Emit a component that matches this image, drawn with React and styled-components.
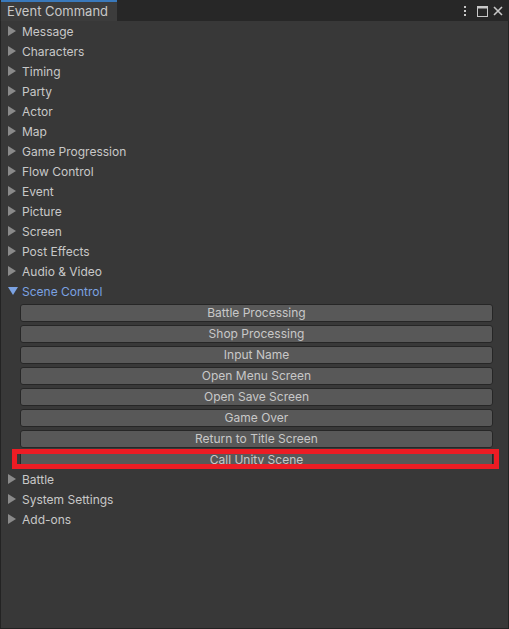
import React from "react";
import styled, { createGlobalStyle } from "styled-components";

const colors = {
  panel: "#383838",
  strip: "#272727",
  tab: "#3c3c3c",
  tabLine: "#3a79bb",
  text: "#c8c8c8",
  arrow: "#8a8a8a",
  open: "#7ba2e2",
  button: "#585858",
  buttonBorder: "#262626",
  edge: "#232323",
  mark: "#ed1c24",
};

const categories = [
  "Message",
  "Characters",
  "Timing",
  "Party",
  "Actor",
  "Map",
  "Game Progression",
  "Flow Control",
  "Event",
  "Picture",
  "Screen",
  "Post Effects",
  "Audio & Video",
];

const sceneCommands = [
  "Battle Processing",
  "Shop Processing",
  "Input Name",
  "Open Menu Screen",
  "Open Save Screen",
  "Game Over",
  "Return to Title Screen",
  "Call Unity Scene",
];

const afterCategories = ["Battle", "System Settings", "Add-ons"];

const GlobalStyle = createGlobalStyle`
  html, body {
    margin: 0;
    padding: 0;
    background: ${colors.panel};
  }
  body {
    font-family: Inter, "Noto Sans", "Liberation Sans", sans-serif;
  }
`;

const Window = styled.div`
  width: 509px;
  height: 629px;
  box-sizing: border-box;
  display: flex;
  flex-direction: column;
  background: ${colors.panel};
  border: 1px solid ${colors.edge};
  border-top: none;
`;

const TabStrip = styled.div`
  height: 21px;
  display: flex;
  align-items: stretch;
  background: ${colors.strip};
  margin: 0 -1px;
  padding-left: 1px;
`;

const Tab = styled.div`
  width: 116px;
  box-sizing: border-box;
  border-top: 2px solid ${colors.tabLine};
  background: ${colors.tab};
  color: ${colors.text};
  font-size: 13px;
  line-height: 19px;
  padding-left: 6px;
`;

const Spacer = styled.div`
  flex: 1;
`;

const Tools = styled.div`
  display: flex;
  align-items: center;
  padding: 1px 6px 0 0;
  color: ${colors.text};
`;

const ToolSlot = styled.span`
  display: flex;
  margin-left: ${(p) => p.$gap}px;
`;

const List = styled.div`
  display: flex;
  flex-direction: column;
`;

const Row = styled.div`
  height: 20px;
  display: flex;
  align-items: center;
  gap: 6px;
  padding-left: 7px;
  font-size: 12px;
  color: ${(p) => (p.$open ? colors.open : colors.text)};
`;

const Arrow = styled.span`
  width: 0;
  height: 0;
  ${(p) =>
    p.$open
      ? `
    border-left: 5px solid transparent;
    border-right: 5px solid transparent;
    border-top: 8px solid ${colors.open};
    margin-right: -2px;
  `
      : `
    border-top: 5px solid transparent;
    border-bottom: 5px solid transparent;
    border-left: 8px solid ${colors.arrow};
  `}
`;

const Commands = styled.div`
  display: flex;
  flex-direction: column;
  gap: 3px;
  padding: 3px 15px 0 19px;
`;

const CommandButton = styled.div`
  position: relative;
  height: 18px;
  box-sizing: border-box;
  border: 1px solid ${colors.buttonBorder};
  border-radius: 3px;
  background: ${colors.button};
  color: ${colors.text};
  font-size: 12px;
  line-height: 16px;
  text-align: center;
`;

const Highlight = styled.div`
  position: absolute;
  left: -9px;
  right: -7px;
  top: -3px;
  bottom: -1px;
  border: 5px solid ${colors.mark};
  pointer-events: none;
`;

const KebabIcon = () => (
  <svg width="4" height="12" viewBox="0 0 4 12">
    <rect x="1" y="1" width="2" height="2" fill="currentColor" />
    <rect x="1" y="5" width="2" height="2" fill="currentColor" />
    <rect x="1" y="9" width="2" height="2" fill="currentColor" />
  </svg>
);

const MaximizeIcon = () => (
  <svg width="11" height="11" viewBox="0 0 11 11">
    <rect x="0.5" y="0.5" width="10" height="10" fill="none" stroke="currentColor" />
    <rect x="0" y="0" width="11" height="2.5" fill="currentColor" />
  </svg>
);

const CloseIcon = () => (
  <svg width="10" height="10" viewBox="0 0 10 10">
    <path d="M1 1 L9 9 M9 1 L1 9" stroke="currentColor" strokeWidth="1.6" />
  </svg>
);

export default function App() {
  return (
    <>
      <GlobalStyle />
      <Window>
        <TabStrip>
          <Tab>Event Command</Tab>
          <Spacer />
          <Tools>
            <ToolSlot $gap={0}>
              <KebabIcon />
            </ToolSlot>
            <ToolSlot $gap={10}>
              <MaximizeIcon />
            </ToolSlot>
            <ToolSlot $gap={5}>
              <CloseIcon />
            </ToolSlot>
          </Tools>
        </TabStrip>
        <List>
          {categories.map((name) => (
            <Row key={name}>
              <Arrow />
              {name}
            </Row>
          ))}
          <Row $open>
            <Arrow $open />
            Scene Control
          </Row>
          <Commands>
            {sceneCommands.map((name, i) => (
              <CommandButton key={name}>
                {name}
                {i === sceneCommands.length - 1 && <Highlight />}
              </CommandButton>
            ))}
          </Commands>
          {afterCategories.map((name) => (
            <Row key={name}>
              <Arrow />
              {name}
            </Row>
          ))}
        </List>
      </Window>
    </>
  );
}
